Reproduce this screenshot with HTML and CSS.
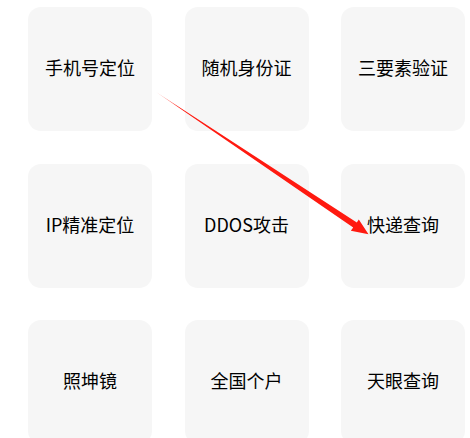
FILE: index.html
```html
<!DOCTYPE html>
<html lang="zh-CN">
<head>
<meta charset="utf-8">
<link rel="stylesheet" href="styles.css">
</head>
<body>
<div class="page">
  <div class="grid">
    <div class="card">手机号定位</div>
    <div class="card">随机身份证</div>
    <div class="card">三要素验证</div>
    <div class="card">IP精准定位</div>
    <div class="card">DDOS攻击</div>
    <div class="card">快递查询</div>
    <div class="card">照坤镜</div>
    <div class="card">全国个户</div>
    <div class="card">天眼查询</div>
  </div>
  <svg class="arrow" width="470" height="438" viewBox="0 0 470 438">
    <defs>
      <linearGradient id="fade" gradientUnits="userSpaceOnUse" x1="156" y1="92" x2="180" y2="108">
        <stop offset="0" stop-color="#ff1a10" stop-opacity="0.3"/>
        <stop offset="1" stop-color="#ff1a10" stop-opacity="1"/>
      </linearGradient>
    </defs>
    <polygon fill="url(#fade)" points="156,92 356.8,222.6 358.8,219.4 368.5,234.3 350.8,230.8 353.2,227.4"/>
  </svg>
</div>
</body>
</html>
```
FILE: styles.css
```css
html, body {
  margin: 0;
  padding: 0;
  background: #ffffff;
}
.page {
  position: relative;
  width: 470px;
  height: 438px;
  overflow: hidden;
}
.grid {
  display: grid;
  grid-template-columns: repeat(3, 124px);
  grid-auto-rows: 124px;
  column-gap: 32.5px;
  row-gap: 32.5px;
  padding: 7px 0 0 28px;
}
.card {
  background: #f6f6f6;
  border-radius: 13px;
  display: flex;
  align-items: center;
  justify-content: center;
  padding-bottom: 4px;
  box-sizing: border-box;
  font-family: "Noto Sans CJK SC", "Noto Sans", sans-serif;
  font-size: 18px;
  color: #000000;
}
.arrow {
  position: absolute;
  left: 0;
  top: 0;
}
```
